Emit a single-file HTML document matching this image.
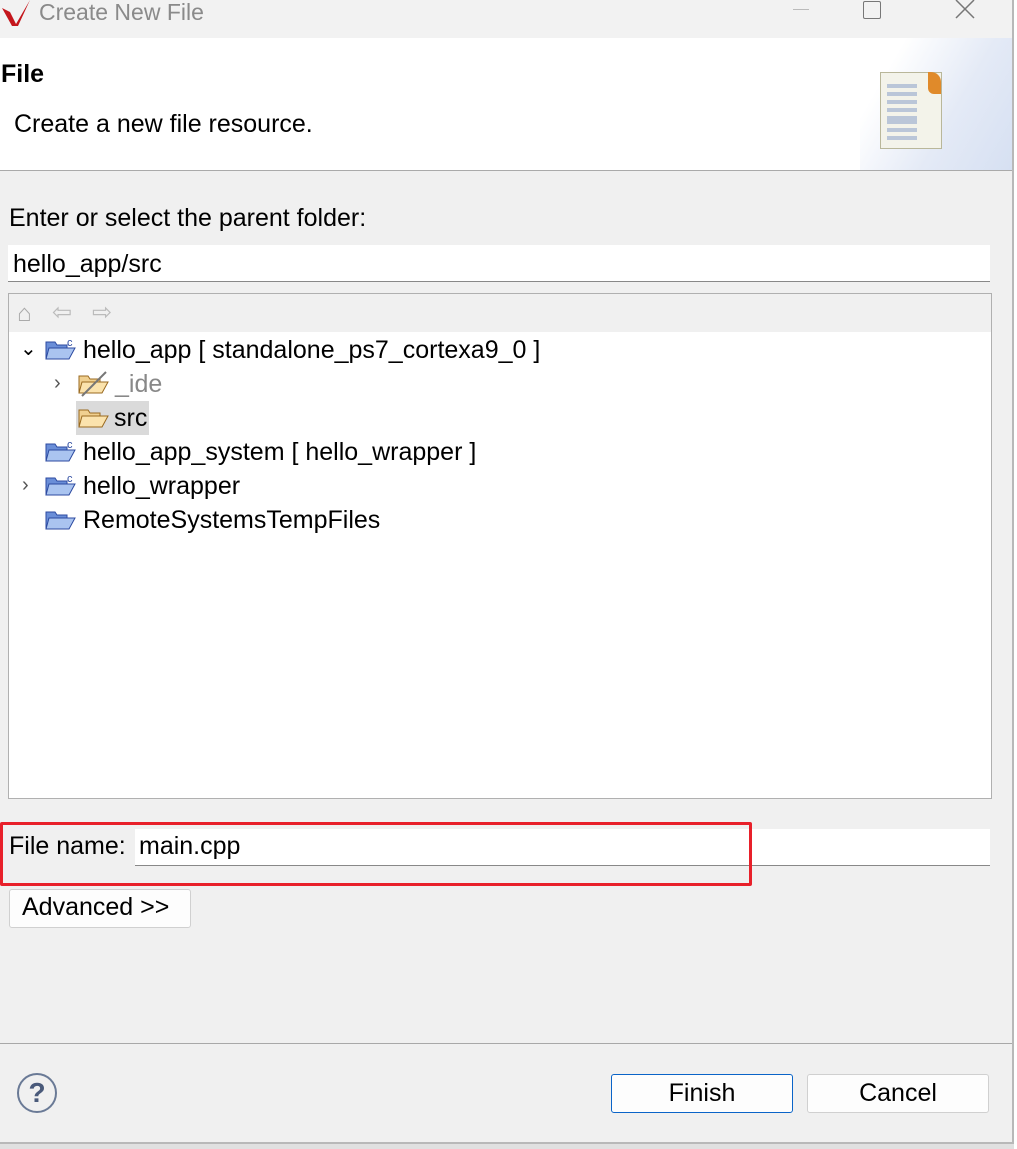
<!DOCTYPE html>
<html><head><style>
body{margin:0;width:1017px;height:1149px;background:#f0f0f0;font-family:"Liberation Sans",sans-serif;color:#000;position:relative;overflow:hidden}
.a{position:absolute;white-space:nowrap}
.t{font-size:25px}
</style></head><body>
<div class="a" style="left:0;top:0;width:1017px;height:38px;background:#f2f2f2"></div>
<svg class="a" style="left:0;top:0" width="34" height="28"><path d="M2 8 L10 12 L16 24 L30 0 L18 26 L12 26 Z" fill="#c4161c"/></svg>
<div class="a" style="left:39px;top:-1px;font-size:23px;color:#8a8a8a">Create New File</div>
<div class="a" style="left:793px;top:9px;width:16px;height:1px;background:#bbb"></div>
<div class="a" style="left:863px;top:1px;width:16px;height:16px;border:1.5px solid #777;border-radius:2px"></div>
<svg class="a" style="left:954px;top:0" width="22" height="20"><path d="M2 0 L20 18 M20 0 L2 18" stroke="#777" stroke-width="1.5"/></svg>
<div class="a" style="left:0;top:38px;width:1013px;height:132px;background:#fff"></div>
<div class="a" style="left:860px;top:38px;width:153px;height:132px;background:linear-gradient(120deg,#fff 20%,#e4eaf6 60%,#d6e0f2)"></div>
<div class="a" style="left:0;top:170px;width:1013px;height:1px;background:#aaa"></div>
<div class="a" style="left:1px;top:60px;font-size:25px;font-weight:bold">File</div>
<div class="a t" style="left:14px;top:110px">Create a new file resource.</div>
<div class="a" style="left:880px;top:72px;width:60px;height:75px;background:#f3f3ea;border:1px solid #b9b79a"></div>
<div class="a" style="left:928px;top:72px;width:13px;height:22px;background:#e08a2a;border-radius:0 10px 0 6px"></div>
<div class="a" style="left:887px;top:84px;width:30px;height:36px;background:repeating-linear-gradient(#bac6d8 0 4px,transparent 4px 8px)"></div>
<div class="a" style="left:887px;top:120px;width:30px;height:20px;background:repeating-linear-gradient(#bac6d8 0 4px,transparent 4px 8px)"></div>
<div class="a t" style="left:9px;top:204px">Enter or select the parent folder:</div>
<div class="a" style="left:8px;top:245px;width:982px;height:36px;background:#fff;border-bottom:1px solid #888"></div>
<div class="a t" style="left:13px;top:250px">hello_app/src</div>
<div class="a" style="left:8px;top:293px;width:982px;height:504px;background:#fff;border:1px solid #b0b0b0"></div>
<div class="a" style="left:9px;top:294px;width:982px;height:38px;background:#f0f0f0"></div>
<div class="a" style="left:17px;top:300px;font-size:24px;color:#aaa">⌂</div>
<div class="a" style="left:52px;top:298px;font-size:24px;color:#bbb">⇦</div>
<div class="a" style="left:92px;top:298px;font-size:24px;color:#bbb">⇨</div>
<svg width="0" height="0" style="position:absolute"><defs>
<g id="pf"><path d="M1 6h9l2 3h10v14H1z" fill="#6a8ed8" stroke="#2c4aa0"/><path d="M4 12h26l-6 11H1z" fill="#aac4f0" stroke="#2c4aa0"/></g>
<g id="yf"><path d="M1 6h9l2 3h10v14H1z" fill="#f0d090" stroke="#9a6a20"/><path d="M4 12h26l-6 11H1z" fill="#fbe3ad" stroke="#9a6a20"/></g>
</defs></svg>
<div class="a" style="left:20px;top:336px;font-size:20px">⌄</div>
<svg class="a" style="left:45px;top:336px" width="32" height="28"><use href="#pf"/><text x="22" y="10" font-size="11" fill="#2c4aa0" font-family="Liberation Sans">c</text></svg>
<div class="a t" style="left:83px;top:336px">hello_app [ standalone_ps7_cortexa9_0 ]</div>
<div class="a" style="left:54px;top:372px;font-size:20px;color:#555">›</div>
<svg class="a" style="left:78px;top:370px" width="32" height="28"><use href="#yf"/><path d="M4 26 L28 2" stroke="#777" stroke-width="2"/></svg>
<div class="a t" style="left:115px;top:370px;color:#888">_ide</div>
<div class="a" style="left:76px;top:401px;width:73px;height:34px;background:#dadada"></div>
<svg class="a" style="left:78px;top:404px" width="32" height="28"><use href="#yf"/></svg>
<div class="a t" style="left:114px;top:404px">src</div>
<svg class="a" style="left:45px;top:438px" width="32" height="28"><use href="#pf"/><text x="22" y="10" font-size="11" fill="#2c4aa0" font-family="Liberation Sans">c</text></svg>
<div class="a t" style="left:83px;top:438px">hello_app_system [ hello_wrapper ]</div>
<div class="a" style="left:22px;top:474px;font-size:20px;color:#555">›</div>
<svg class="a" style="left:45px;top:472px" width="32" height="28"><use href="#pf"/><text x="22" y="10" font-size="11" fill="#2c4aa0" font-family="Liberation Sans">c</text></svg>
<div class="a t" style="left:83px;top:472px">hello_wrapper</div>
<svg class="a" style="left:45px;top:506px" width="32" height="28"><use href="#pf"/></svg>
<div class="a t" style="left:83px;top:506px">RemoteSystemsTempFiles</div>
<div class="a" style="left:135px;top:829px;width:855px;height:36px;background:#fff;border-bottom:1px solid #888"></div>
<div class="a t" style="left:9px;top:832px">File name:</div>
<div class="a t" style="left:139px;top:832px">main.cpp</div>
<div class="a" style="left:0;top:822px;width:746px;height:58px;border:3.5px solid #e8202a;border-radius:2px"></div>
<div class="a" style="left:9px;top:889px;width:180px;height:37px;background:#fdfdfd;border:1px solid #d0d0d0;border-radius:3px"></div>
<div class="a t" style="left:22px;top:893px">Advanced &gt;&gt;</div>
<div class="a" style="left:0;top:1043px;width:1013px;height:1px;background:#a8a8a8"></div>
<div class="a" style="left:17px;top:1073px;width:36px;height:36px;border:2px solid #6a7a96;border-radius:50%;text-align:center;font-size:28px;line-height:36px;color:#4a5a7a;font-weight:bold">?</div>
<div class="a" style="left:611px;top:1074px;width:180px;height:37px;background:#fdfdfd;border:1px solid #0a64c8;border-radius:3px;text-align:center;font-size:25px;line-height:37px">Finish</div>
<div class="a" style="left:807px;top:1074px;width:180px;height:37px;background:#fdfdfd;border:1px solid #d0d0d0;border-radius:3px;text-align:center;font-size:25px;line-height:37px">Cancel</div>
<div class="a" style="left:1012px;top:0;width:2px;height:1143px;background:#b8b8b8"></div>
<div class="a" style="left:0;top:1142px;width:1014px;height:2px;background:#b8b8b8"></div>
<div class="a" style="left:0;top:1144px;width:1017px;height:5px;background:#e0e0e0"></div>
<div class="a" style="left:1014px;top:0;width:3px;height:1149px;background:#fff"></div>
</body></html>
